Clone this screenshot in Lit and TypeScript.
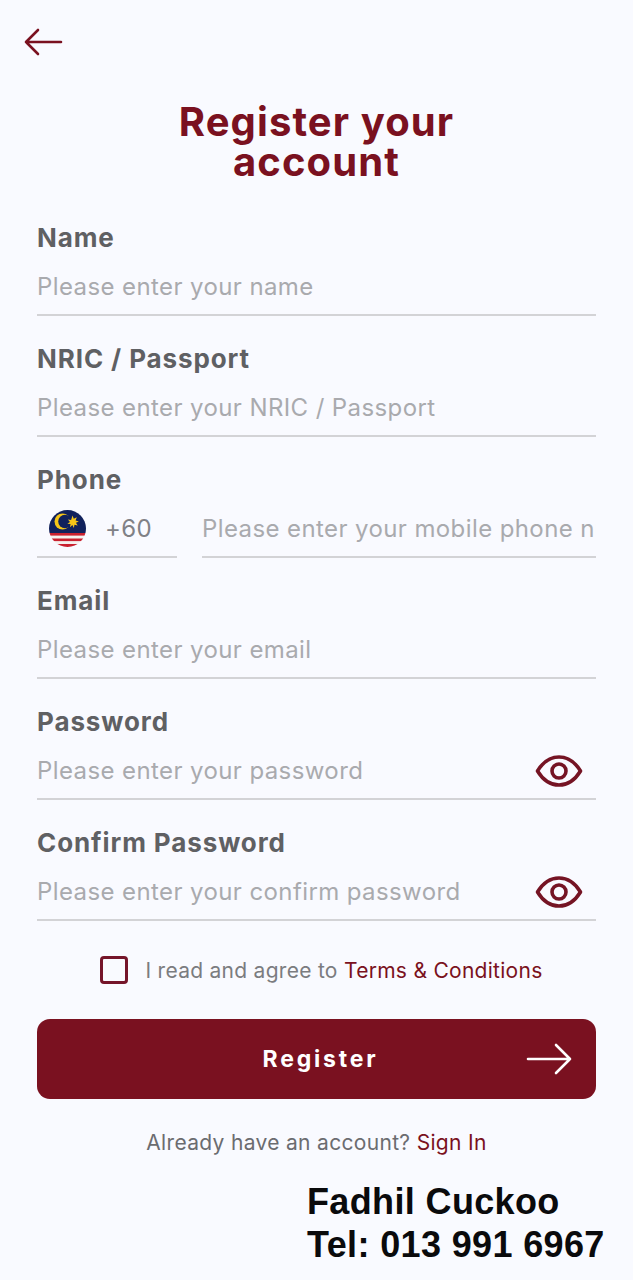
import { LitElement, html, css, svg } from 'lit';
import { customElement } from 'lit/decorators.js';

const eye = html`<svg class="eye" width="48" height="34" viewBox="0 0 48 34" fill="none" stroke="#751424" stroke-width="3.6" aria-hidden="true">
  <path d="M2.5 17C8 8 15.5 3 24 3s16 5 21.5 14C40 26 32.5 31 24 31S8 26 2.5 17Z" stroke-linejoin="round" />
  <circle cx="24" cy="17" r="7" />
</svg>`;

const flag = html`<svg width="37" height="37" viewBox="0 0 37 37" aria-hidden="true">
  <defs><clipPath id="c"><circle cx="18.5" cy="18.5" r="18.5" /></clipPath></defs>
  <g clip-path="url(#c)">
    <rect width="37" height="37" fill="#f4f0ee" />
    <rect width="37" height="23" fill="#10215c" />
    <rect y="23" width="37" height="2.6" fill="#c9202f" />
    <rect y="28.5" width="37" height="2.6" fill="#c9202f" />
    <rect y="34" width="37" height="3" fill="#c9202f" />
    <circle cx="13.5" cy="11.5" r="8" fill="#f5c518" />
    <circle cx="16" cy="11.5" r="6.8" fill="#10215c" />
    ${svg`<path d="M23.5 5.5l1.3 3.3 3-1.5-1.2 3.2 3.3.9-3 1.4 1.8 2.8-3.2-.9-.7 3.3-1.4-3-2.4 2.2.5-3.3-3.2-.2 2.7-1.8-2.1-2.5 3.2.6z" fill="#f5c518" />`}
  </g>
</svg>`;

@customElement('app-root')
export class AppRoot extends LitElement {
  static styles = css`
    :host {
      display: block;
      min-height: 1280px;
      background: #f9faff;
      font-family: 'Inter', 'Liberation Sans', sans-serif;
      color: #5f6063;
      position: relative;
      overflow: hidden;
    }
    .page {
      display: flex;
      flex-direction: column;
      padding: 0 37px;
    }
    .back {
      display: block;
      margin: 28px 0 0 -13px;
      height: 28px;
    }
    h1 {
      margin: 46px 0 0;
      font-size: 40px;
      line-height: 40px;
      font-weight: 700;
      text-align: center;
      color: #7a1120;
      letter-spacing: 1.1px;
    }
    form {
      display: flex;
      flex-direction: column;
      margin-top: 40px;
    }
    .field {
      height: 121px;
      display: flex;
      flex-direction: column;
    }
    label {
      font-size: 26px;
      line-height: 32px;
      height: 32px;
      font-weight: 700;
      letter-spacing: 0.9px;
      color: #5f6063;
    }
    .row {
      display: flex;
      gap: 25px;
      margin-top: 6px;
    }
    .box {
      flex: 1;
      min-width: 0;
      height: 56px;
      box-sizing: border-box;
      padding-bottom: 1px;
      display: flex;
      align-items: center;
      border-bottom: 2px solid #d3d3d6;
    }
    .code {
      flex: 0 0 140px;
      padding-left: 12px;
      gap: 19px;
      font-size: 24px;
      letter-spacing: 0.4px;
      color: #808186;
    }
    input {
      flex: 1;
      min-width: 0;
      border: 0;
      padding: 0;
      background: none;
      outline: none;
      font: inherit;
      font-size: 24px;
      letter-spacing: 0.4px;
      color: #5f6063;
    }
    input::placeholder {
      color: #a9aaae;
      opacity: 1;
    }
    .eye {
      flex: none;
      margin-right: 13px;
    }
    .agree {
      display: flex;
      align-items: center;
      justify-content: center;
      gap: 17px;
      margin-top: 8px;
      padding-left: 10px;
      height: 28px;
      font-size: 21px;
      letter-spacing: 0.28px;
      color: #7b7c80;
    }
    .check {
      width: 28px;
      height: 28px;
      box-sizing: border-box;
      border: 3px solid #75152a;
      border-radius: 4px;
    }
    a {
      color: #7a1120;
      text-decoration: none;
    }
    button {
      margin-top: 35px;
      height: 80px;
      border: 0;
      border-radius: 13px;
      background: #7a1120;
      color: #fff;
      font: inherit;
      font-size: 23px;
      font-weight: 700;
      letter-spacing: 2.8px;
      display: flex;
      align-items: center;
      justify-content: center;
      position: relative;
      padding: 0 0 0 8px;
    }
    button svg {
      position: absolute;
      right: 24px;
      top: 24px;
    }
    .signin {
      margin-top: 31px;
      text-align: center;
      font-size: 21px;
      line-height: 26px;
      letter-spacing: 0.32px;
      color: #6b6c70;
    }
    .stamp {
      position: absolute;
      left: 307px;
      top: 1180px;
      font-family: 'Liberation Sans', Arial, sans-serif;
      font-weight: 700;
      font-size: 36px;
      line-height: 43px;
      letter-spacing: 0.36px;
      color: #0a0a0c;
      white-space: nowrap;
    }
  `;

  private field(name: string, placeholder: string, secret = false) {
    return html`<div class="field">
      <label>${name}</label>
      <div class="row">
        <div class="box">
          <input type=${secret ? 'password' : 'text'} placeholder=${placeholder} />
          ${secret ? eye : ''}
        </div>
      </div>
    </div>`;
  }

  render() {
    return html`<div class="page">
        <svg class="back" width="39" height="28" viewBox="0 0 39 28" fill="none" stroke="#7a1120" stroke-width="2.6" stroke-linecap="round" stroke-linejoin="round" aria-hidden="true">
          <path d="M37 14H2M14 2 2 14l12 12" />
        </svg>
        <h1>Register your<br />account</h1>
        <form>
          ${this.field('Name', 'Please enter your name')}
          ${this.field('NRIC / Passport', 'Please enter your NRIC / Passport')}
          <div class="field">
            <label>Phone</label>
            <div class="row">
              <div class="box code">${flag}<span>+60</span></div>
              <div class="box"><input type="tel" placeholder="Please enter your mobile phone number" /></div>
            </div>
          </div>
          ${this.field('Email', 'Please enter your email')}
          ${this.field('Password', 'Please enter your password', true)}
          ${this.field('Confirm Password', 'Please enter your confirm password', true)}
          <div class="agree">
            <span class="check"></span>
            <span>I read and agree to <a href="#">Terms &amp; Conditions</a></span>
          </div>
          <button type="button">
            Register
            <svg width="46" height="32" viewBox="0 0 46 32" fill="none" stroke="#fff" stroke-width="2.6" stroke-linecap="round" stroke-linejoin="round" aria-hidden="true">
              <path d="M2 16h42M30 2l14 14-14 14" />
            </svg>
          </button>
        </form>
        <div class="signin">Already have an account? <a href="#">Sign In</a></div>
      </div>
      <div class="stamp">Fadhil Cuckoo<br />Tel: 013 991 6967</div>`;
  }
}
